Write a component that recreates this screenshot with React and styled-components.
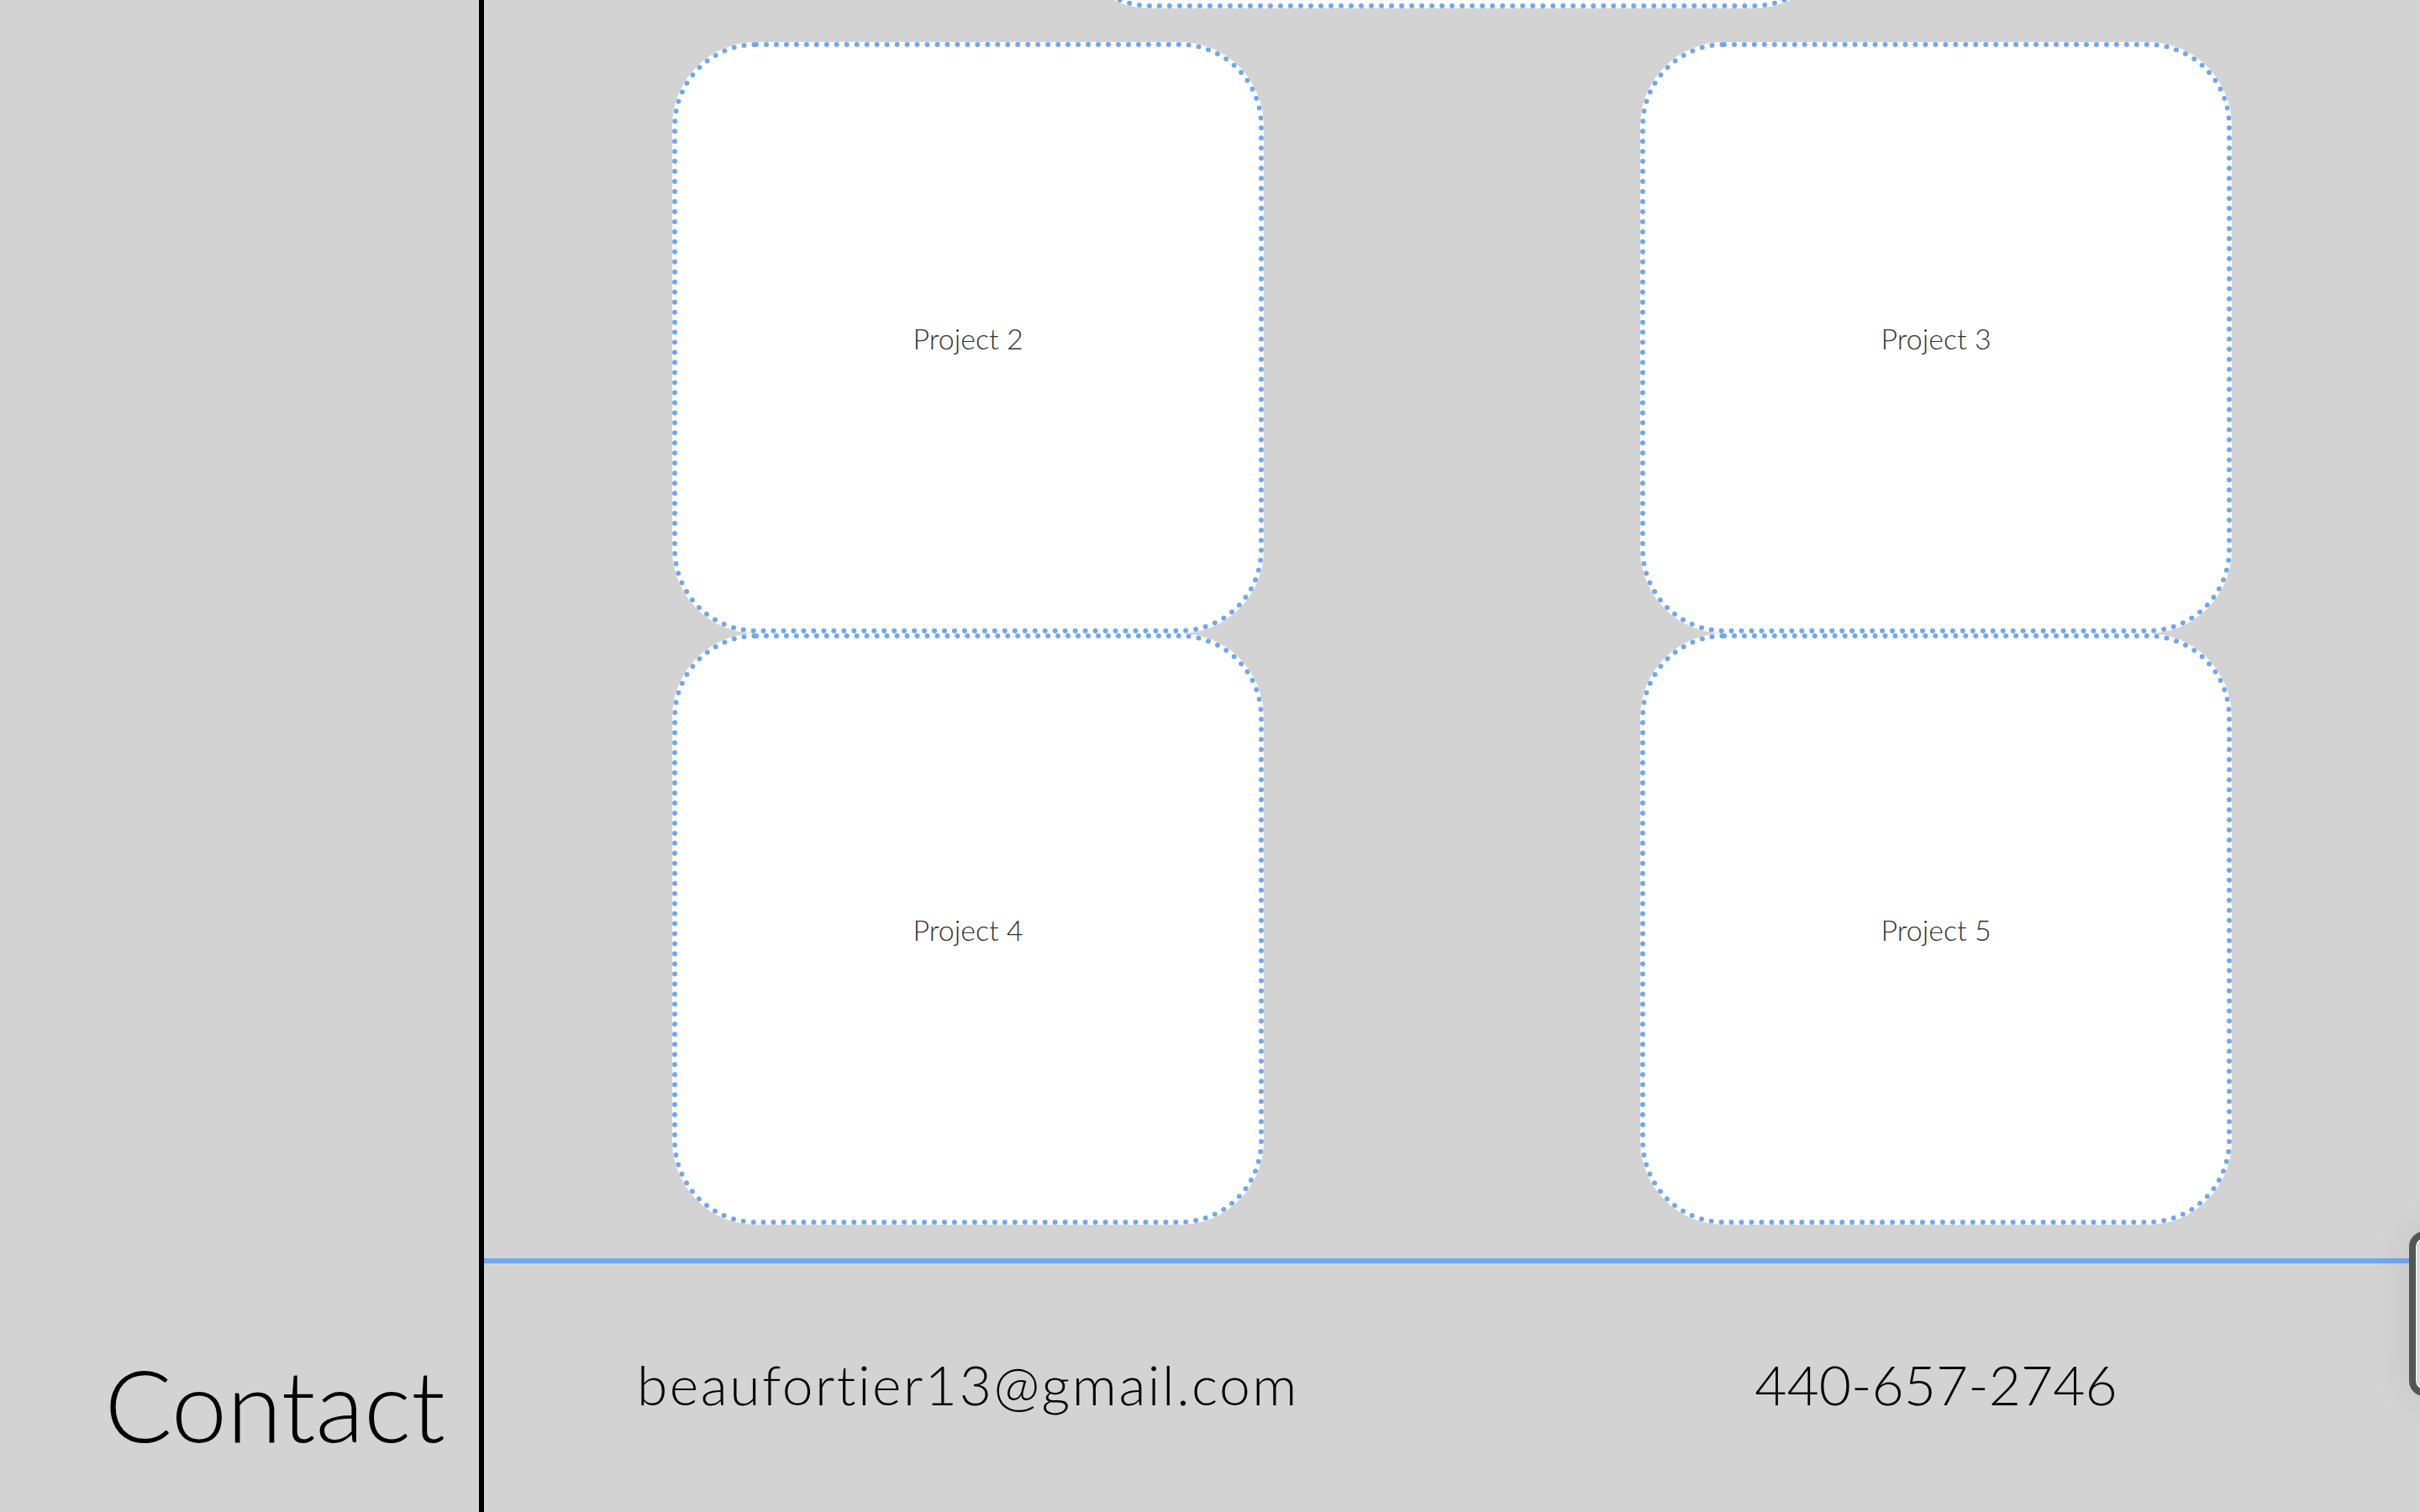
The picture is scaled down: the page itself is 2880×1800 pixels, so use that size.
import React from 'react'
import styled, { createGlobalStyle } from 'styled-components'

const GlobalStyle = createGlobalStyle`
  html, body {
    margin: 0;
    padding: 0;
    background: #d3d3d3;
    overflow: hidden;
  }

  body {
    font-family: 'Lato', 'Noto Sans', sans-serif;
    font-weight: 300;
    color: #000;
  }
`

const Page = styled.div`
  display: flex;
  flex-direction: column;
  min-height: 100vh;
`

const Section = styled.section`
  display: grid;
  grid-template-columns: 576px 1fr;
  min-height: ${props => props.fill ? '300px' : 'auto'};
`

const Side = styled.div`
  box-sizing: border-box;
  border-right: 6px solid #000;
  display: flex;
  align-items: flex-start;
  justify-content: flex-end;
  padding: 0 40px 0 0;
`

const SideTitle = styled.h2`
  margin: 0;
  padding-top: 96px;
  font-size: 119px;
  font-weight: 300;
  line-height: 1.2;
`

const Projects = styled.div`
  display: flex;
  flex-direction: column;
  align-items: center;
  padding-bottom: 40px;
  border-bottom: 6px solid #70a8ec;
`

const Card = styled.div`
  box-sizing: border-box;
  width: ${props => props.wide ? '918px' : '704px'};
  height: ${props => props.wide ? '500px' : '704px'};
  border: 6px dotted #70a8ec;
  border-radius: 100px;
  background: #fff;
  display: flex;
  align-items: center;
  justify-content: center;
  font-size: 34px;
  font-weight: 300;
  color: #333;
`

const Feature = styled(Card)`
  margin-top: -490px;
  margin-bottom: 40px;
`

const CardGrid = styled.div`
  align-self: stretch;
  display: grid;
  grid-template-columns: 1fr 1fr;
  justify-items: center;
`

const ContactRow = styled.div`
  display: grid;
  grid-template-columns: 1fr 1fr;
  justify-items: center;
  align-items: start;
  padding-top: 104px;
`

const ContactItem = styled.a`
  font-size: 66px;
  font-weight: 300;
  line-height: 1.2;
  letter-spacing: ${props => props.spread ? '2.5px' : '0'};
  color: #000;
  text-decoration: none;
`

const Widget = styled.div`
  position: fixed;
  top: 1466px;
  right: -60px;
  box-sizing: border-box;
  width: 73px;
  height: 196px;
  border: 8px solid #555;
  border-radius: 18px;
  background: #d9d9d9;
  box-shadow: 0 0 50px rgba(0, 0, 0, 0.08), inset 0 0 0 1px #fff;
`

const projects = ['Project 2', 'Project 3', 'Project 4', 'Project 5']

export default function App() {
  return (
    <>
      <GlobalStyle />
      <Page>
        <Section>
          <Side />
          <Projects>
            <Feature wide />
            <CardGrid>
              {projects.map(name => (
                <Card key={name}>{name}</Card>
              ))}
            </CardGrid>
          </Projects>
        </Section>
        <Section fill>
          <Side>
            <SideTitle>Contact</SideTitle>
          </Side>
          <ContactRow>
            <ContactItem spread href="mailto:beaufortier13@gmail.com">beaufortier13@gmail.com</ContactItem>
            <ContactItem href="tel:4406572746">440-657-2746</ContactItem>
          </ContactRow>
        </Section>
      </Page>
      <Widget />
    </>
  )
}
